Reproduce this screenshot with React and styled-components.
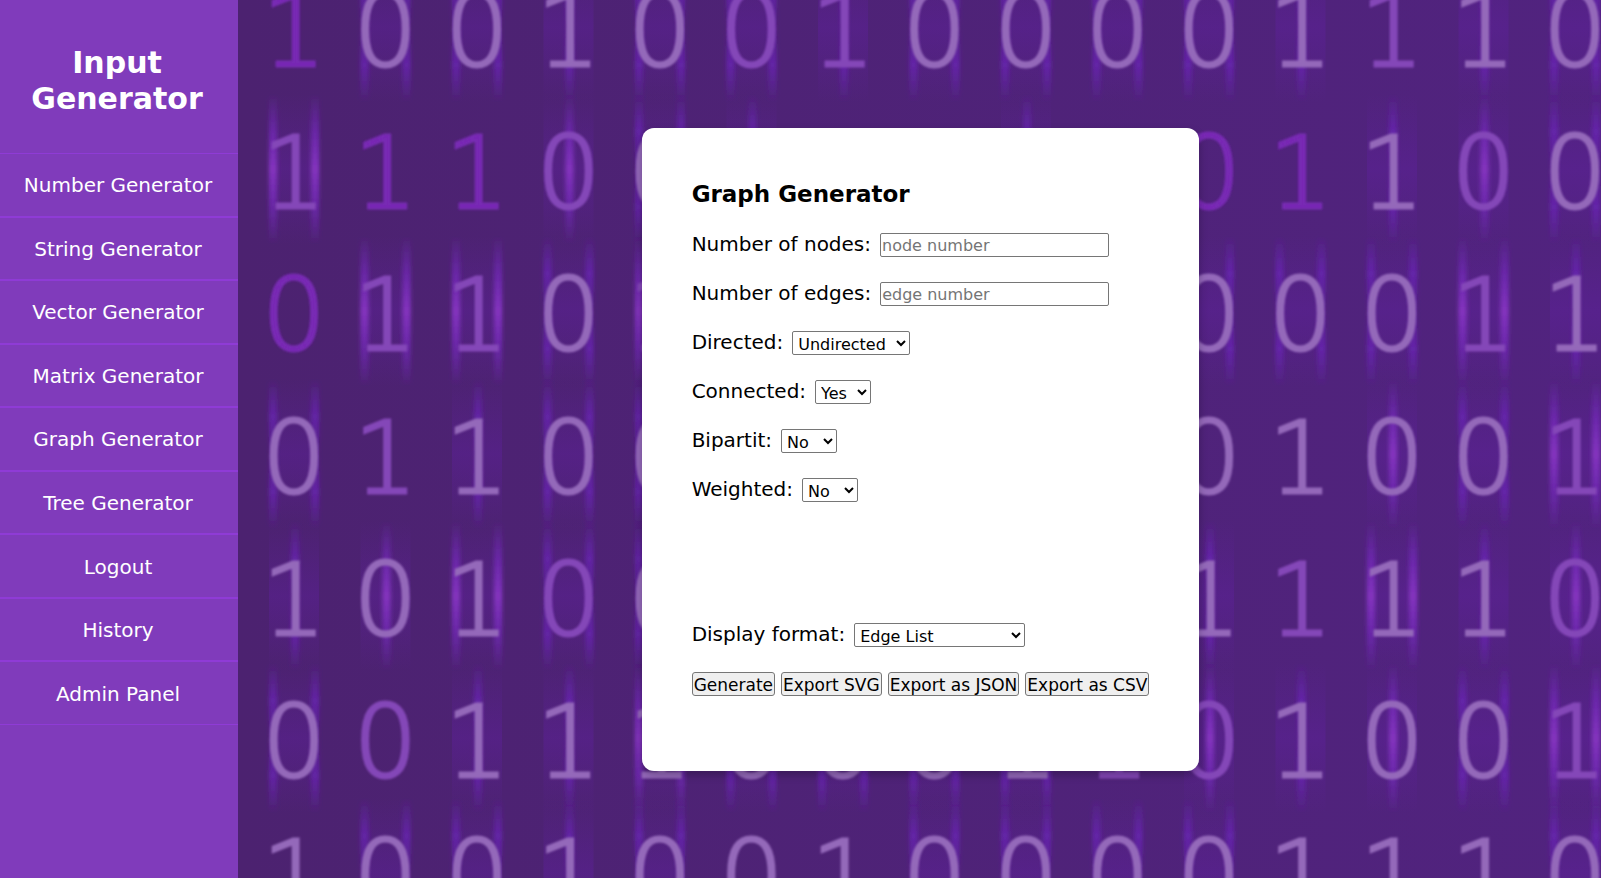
import React from 'react';
import styled, { createGlobalStyle } from 'styled-components';

const GlobalStyle = createGlobalStyle`
  * { box-sizing: border-box; margin: 0; padding: 0; }
  body {
    font-family: Verdana, 'DejaVu Sans', sans-serif;
    font-size: 20px;
    line-height: 24px;
    color: #000;
    background: #4e2375;
  }
`;

const Page = styled.div`
  display: flex;
  min-height: 100vh;
`;

const Sidebar = styled.aside`
  flex: 0 0 238px;
  padding-top: 45px;
  background: #803bbb;
  color: #fff;
  text-align: center;
`;

const SiteTitle = styled.h1`
  padding: 0 22px 0 18px;
  margin-bottom: 36px;
  font-size: 30px;
  line-height: 36px;
`;

const NavList = styled.ul`
  display: grid;
  grid-auto-rows: 1fr;
  min-height: 572px;
  list-style: none;
`;

const NavItem = styled.li`
  display: flex;
  border: solid #8f3bd6;
  border-width: 1px 0;
`;

const NavLink = styled.a`
  flex: 1;
  display: flex;
  align-items: center;
  justify-content: center;
  padding: 1px 2px 0 0;
  color: inherit;
  text-decoration: none;
`;

const Main = styled.main`
  position: relative;
  isolation: isolate;
  flex: 1;
  display: flex;
  align-items: center;
  justify-content: center;
  padding: 40px 0 20px 2px;
  overflow: hidden;
`;

const Backdrop = styled.svg`
  position: absolute;
  inset: 0;
  z-index: -1;
  width: 100%;
  height: 100%;
  font-family: 'DejaVu Sans Light', 'DejaVu Sans', sans-serif;
  font-size: 100px;
  font-weight: 200;
`;

const Card = styled.form`
  display: flex;
  flex-direction: column;
  gap: 25px;
  padding: 50px 50px 75px;
  border-radius: 12px;
  background: #fff;
  box-shadow: 0 4px 8px rgba(0, 0, 0, 0.25);
`;

const CardTitle = styled.h2`
  padding-top: 2px;
  font-size: 23px;
  line-height: 28px;
`;

const Field = styled.div`
  display: flex;
  gap: 9px;
  height: 24px;
  margin-top: ${(p) => (p.$spaced ? '96px' : '0')};
`;

const Label = styled.label`
  line-height: 22px;
`;

const ButtonRow = styled.div`
  display: flex;
  gap: 6px;
  height: 24px;
`;

const TextInput = styled.input`
  width: 229px;
  border: 1px solid #767676;
  border-radius: 2px;
  padding: 2px 1px 0;
  font: 16px Verdana, 'DejaVu Sans', sans-serif;
  &::placeholder { color: #757575; }
`;

const Select = styled.select`
  width: ${(p) => p.$width};
  border: 1px solid #767676;
  border-radius: 2px;
  padding: 2px 1px 0;
  background-color: #fff;
  color: #000;
  font: 16px Verdana, 'DejaVu Sans', sans-serif;
`;

const Button = styled.button`
  border: 1px solid #767676;
  border-radius: 3px;
  padding: 2px 1px 0;
  background: #efefef;
  color: #000;
  font: 17px Verdana, 'DejaVu Sans', sans-serif;
  white-space: nowrap;
`;

const links = [
  'Number Generator', 'String Generator', 'Vector Generator', 'Matrix Generator',
  'Graph Generator', 'Tree Generator', 'Logout', 'History', 'Admin Panel',
];

// Each row: digits, tone (b bright, m medium, d dim) and
// glow (e edges, E strong edges, c centre, C strong centre, - none).
// A blank cell is left empty.
const rows = [
  { y: 67, digits: '100100100001110', tone: 'dbbbbmmbbbbbmbb', glow: '-eeceeceeeec-ce' },
  { y: 209, digits: '11100     01100', tone: 'mddmbmmbbbddbmb', glow: 'E--Cec--c---cCe' },
  { y: 351, digits: '01101     00011', tone: 'dmmbmbbbbbbbbmb', glow: '-EEeE-----eeeEc' },
  { y: 494, digits: '01100     01001', tone: 'bmbbbbbbbbbbbbm', glow: 'e-cee-------CeE' },
  { y: 636, digits: '10100     11110', tone: 'bbbmbbbbbbbmbbm', glow: 'cCEee-----c-EcC' },
  { y: 778, digits: '001110001101001', tone: 'bmbbbbbbbmmbbbm', glow: 'e-ccEeeee-CcCeE' },
  { y: 913, digits: '100100100001110', tone: 'bbbbbbbbbbbbbbb', glow: '-eece--eeee---e' },
];

const tones = { b: '#9469ba', m: '#8447b8', d: '#7829b4' };
const columnX = (i) => 56 + i * 91.5;

function Glow({ x, y, kind }) {
  if (kind === '-') return null;
  const strong = kind === 'E' || kind === 'C';
  const offsets = kind.toLowerCase() === 'e' ? [-21, 21] : [1];
  return (
    <g>
      <rect x={x - 25} y={y - 115} width="50" height="150" fill="url(#haze)" />
      {offsets.map((dx) => (
        <rect
          key={dx}
          x={x + dx - 4}
          y={y - 115}
          width="8"
          height="150"
          fill={strong ? 'url(#beamStrong)' : 'url(#beam)'}
          filter="url(#glowBlur)"
        />
      ))}
    </g>
  );
}

function BinaryBackdrop() {
  return (
    <Backdrop viewBox="0 0 1363 878" preserveAspectRatio="xMidYMid slice" aria-hidden="true">
      <defs>
        <linearGradient id="base">
          <stop offset="0" stopColor="#4c2270" />
          <stop offset="1" stopColor="#51237f" />
        </linearGradient>
        <linearGradient id="haze" x2="0" y2="1">
          <stop offset="0" stopColor="#6020a0" stopOpacity="0" />
          <stop offset="0.5" stopColor="#6020a0" stopOpacity="0.4" />
          <stop offset="1" stopColor="#6020a0" stopOpacity="0" />
        </linearGradient>
        <linearGradient id="beam" x2="0" y2="1">
          <stop offset="0" stopColor="#7024c4" stopOpacity="0" />
          <stop offset="0.25" stopColor="#7024c4" stopOpacity="0.6" />
          <stop offset="0.5" stopColor="#7024c4" stopOpacity="0.1" />
          <stop offset="0.75" stopColor="#7024c4" stopOpacity="0.6" />
          <stop offset="1" stopColor="#7024c4" stopOpacity="0" />
        </linearGradient>
        <linearGradient id="beamStrong" x2="0" y2="1">
          <stop offset="0" stopColor="#7a2ac4" stopOpacity="0" />
          <stop offset="0.25" stopColor="#7a2ac4" stopOpacity="0.6" />
          <stop offset="0.5" stopColor="#8636c0" />
          <stop offset="0.75" stopColor="#7a2ac4" stopOpacity="0.6" />
          <stop offset="1" stopColor="#7a2ac4" stopOpacity="0" />
        </linearGradient>
        <filter id="glowBlur" x="-100%" width="300%">
          <feGaussianBlur stdDeviation="2 1" />
        </filter>
        <filter id="soft">
          <feGaussianBlur stdDeviation="0.8" />
        </filter>
      </defs>
      <rect width="1363" height="878" fill="url(#base)" />
      {rows.map((row) => [...row.glow].map((kind, i) => (
        <Glow key={`${row.y}-${i}`} x={columnX(i)} y={row.y} kind={kind} />
      )))}
      <g filter="url(#soft)" textAnchor="middle" strokeWidth="3">
        {rows.map((row) => [...row.digits].map((digit, i) => (
          digit === ' ' ? null : (
            <text
              key={`${row.y}-${i}`}
              x={columnX(i)}
              y={row.y - 1}
              fill={tones[row.tone[i]]}
              stroke={tones[row.tone[i]]}
            >
              {digit}
            </text>
          )
        )))}
      </g>
    </Backdrop>
  );
}

function SelectField({ id, label, options, width = '56px', spaced }) {
  return (
    <Field $spaced={spaced}>
      <Label htmlFor={id}>{label}</Label>
      <Select id={id} $width={width}>
        {options.map((o) => <option key={o}>{o}</option>)}
      </Select>
    </Field>
  );
}

export default function App() {
  return (
    <>
      <GlobalStyle />
      <Page>
        <Sidebar>
          <SiteTitle>Input Generator</SiteTitle>
          <nav>
            <NavList>
              {links.map((name) => (
                <NavItem key={name}><NavLink href="#">{name}</NavLink></NavItem>
              ))}
            </NavList>
          </nav>
        </Sidebar>
        <Main>
          <BinaryBackdrop />
          <Card onSubmit={(e) => e.preventDefault()}>
            <CardTitle>Graph Generator</CardTitle>
            <Field>
              <Label htmlFor="nodes">Number of nodes:</Label>
              <TextInput id="nodes" placeholder="node number" />
            </Field>
            <Field>
              <Label htmlFor="edges">Number of edges:</Label>
              <TextInput id="edges" placeholder="edge number" />
            </Field>
            <SelectField id="directed" label="Directed:" options={['Undirected', 'Directed']} width="118px" />
            <SelectField id="connected" label="Connected:" options={['Yes', 'No']} />
            <SelectField id="bipartit" label="Bipartit:" options={['No', 'Yes']} />
            <SelectField id="weighted" label="Weighted:" options={['No', 'Yes']} />
            <SelectField id="format" label="Display format:" options={['Edge List']} width="171px" spaced />
            <ButtonRow>
              <Button type="submit">Generate</Button>
              <Button type="button">Export SVG</Button>
              <Button type="button">Export as JSON</Button>
              <Button type="button">Export as CSV</Button>
            </ButtonRow>
          </Card>
        </Main>
      </Page>
    </>
  );
}
